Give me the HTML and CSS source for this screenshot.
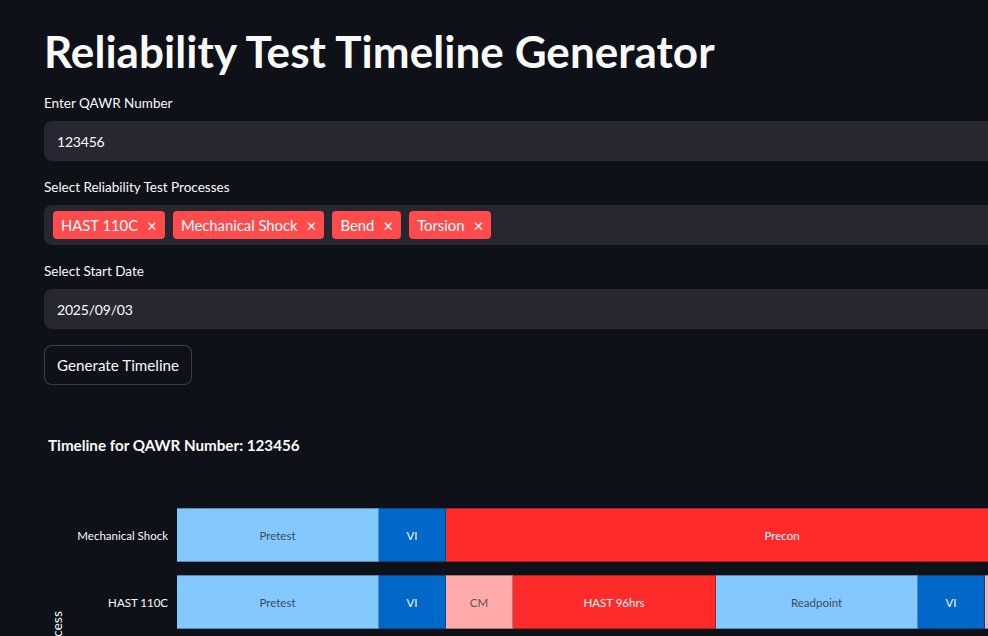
FILE: index.html
```html
<!DOCTYPE html>
<html>
<head>
<meta charset="utf-8">
<link rel="stylesheet" href="styles.css">
</head>
<body>
<main class="main">
  <h1 class="title">Reliability Test Timeline Generator</h1>

  <div class="widget">
    <label class="label">Enter QAWR Number</label>
    <div class="field num">123456</div>
  </div>

  <div class="widget">
    <label class="label">Select Reliability Test Processes</label>
    <div class="field multi">
      <span class="tag">HAST 110C<span class="x">×</span></span>
      <span class="tag">Mechanical Shock<span class="x">×</span></span>
      <span class="tag">Bend<span class="x">×</span></span>
      <span class="tag">Torsion<span class="x">×</span></span>
    </div>
  </div>

  <div class="widget">
    <label class="label">Select Start Date</label>
    <div class="field num">2025/09/03</div>
  </div>

  <div class="widget">
    <button class="btn">Generate Timeline</button>
  </div>

  <section class="chart">
    <div class="chart-title">Timeline for QAWR Number: 123456</div>
    <div class="plot">
      <div class="axis-title">Process</div>
      <div class="row">
        <div class="ylabel">Mechanical Shock</div>
        <div class="bars">
          <div class="seg lb" style="width:202px">Pretest</div>
          <div class="seg db" style="width:67px">VI</div>
          <div class="seg rd" style="width:673px">Precon</div>
        </div>
      </div>
      <div class="row">
        <div class="ylabel">HAST 110C</div>
        <div class="bars">
          <div class="seg lb" style="width:202px">Pretest</div>
          <div class="seg db" style="width:67px">VI</div>
          <div class="seg pk" style="width:67px">CM</div>
          <div class="seg rd" style="width:203px">HAST 96hrs</div>
          <div class="seg lb" style="width:202px">Readpoint</div>
          <div class="seg db" style="width:67px">VI</div>
          <div class="seg pk" style="width:67px">CM</div>
        </div>
      </div>
    </div>
  </section>
</main>
</body>
</html>
```

FILE: styles.css
```css
html, body {
  margin: 0;
  padding: 0;
  background: #0e1117;
  overflow: hidden;
  height: 100%;
}
body {
  font-family: Lato, "Open Sans", sans-serif;
  color: #fafafa;
}
.main {
  width: 1200px;
  padding: 24px 0 0 44px;
  box-sizing: border-box;
}
.title {
  font-size: 44px;
  font-weight: 700;
  line-height: 54px;
  margin: 0 0 15px 0;
  letter-spacing: 0.05px;
}
.widget {
  margin-bottom: 16px;
}
.label {
  display: block;
  font-size: 13.5px;
  line-height: 20px;
  height: 28px;
}
.field {
  height: 40px;
  background: #262730;
  border-radius: 8px;
  box-sizing: border-box;
  padding: 0 13px;
  display: flex;
  align-items: center;
  font-size: 15px;
}
.num {
  font-size: 14px;
  letter-spacing: -0.2px;
}
.multi {
  padding: 0 9px;
  gap: 8px;
}
.tag {
  display: flex;
  align-items: center;
  height: 28px;
  background: #ff4b4b;
  border-radius: 4px;
  padding: 0 8px 0 8px;
  font-size: 14.8px;
  color: #fff;
}
.x {
  margin-left: 9px;
  font-size: 17px;
  line-height: 1;
}
.btn {
  height: 40px;
  padding: 0 12px;
  background: #0e1117;
  border: 1px solid rgba(250, 250, 250, 0.2);
  border-radius: 8px;
  color: #fafafa;
  font-family: inherit;
  font-size: 15.2px;
}
.chart {
  position: relative;
  padding-top: 34px;
}
.chart-title {
  font-size: 15.2px;
  font-weight: 700;
  margin-left: 4px;
  line-height: 20px;
}
.plot {
  position: relative;
  margin-top: 53px;
  margin-left: -44px;
}
.axis-title {
  position: absolute;
  left: 50px;
  top: 103px;
  writing-mode: vertical-rl;
  transform: rotate(180deg);
  font-size: 14px;
  line-height: 14px;
}
.row {
  display: flex;
  align-items: center;
  height: 54px;
  margin-bottom: 13px;
}
.ylabel {
  width: 168px;
  text-align: right;
  font-size: 11.5px;
  padding-right: 9px;
}
.bars {
  display: flex;
  height: 54px;
  flex: none;
}
.seg {
  flex: none;
  height: 100%;
  display: flex;
  align-items: center;
  justify-content: center;
  font-size: 11.5px;
  box-sizing: border-box;
  border: 1px solid rgba(14, 17, 23, 0.35);
  border-left: none;
}
.lb { background: #83c9ff; color: #3d4a5c; }
.db { background: #0068c9; color: #fafafa; }
.rd { background: #ff2b2b; color: #fafafa; }
.pk { background: #ffabab; color: #5a5560; }
```
